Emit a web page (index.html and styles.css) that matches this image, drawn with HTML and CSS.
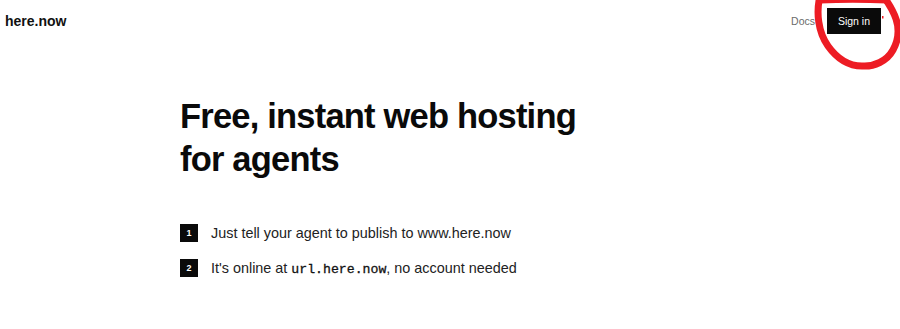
FILE: index.html
```html
<!DOCTYPE html>
<html>
<head>
<meta charset="utf-8">
<link rel="stylesheet" href="styles.css">
</head>
<body>
<header class="topbar">
  <div class="logo">here.now</div>
  <nav class="nav">
    <a class="docs" href="#">Docs</a>
    <a class="signin" href="#">Sign in</a>
  </nav>
</header>
<main class="hero">
  <h1 class="title">Free, instant web hosting<br>for agents</h1>
  <ol class="steps">
    <li class="step"><span class="badge">1</span><span>Just tell your agent to publish to www.here.now</span></li>
    <li class="step"><span class="badge">2</span><span>It's online at <code class="mono">url.here.now</code>, no account needed</span></li>
  </ol>
</main>
<svg class="scribble" width="90" height="75" viewBox="0 0 90 75">
  <path d="M10 -4 C6 12, 8 32, 18 46 C28 60, 40 66, 52 66 C64 67, 77 61, 83 50 C89 39, 89 28, 86 19 C83 10, 79 4, 74 -3" fill="none" stroke="#ed1c24" stroke-width="7" stroke-linecap="round"/>
  <path d="M10 0 C30 -1, 55 -1, 78 0" fill="none" stroke="#ed1c24" stroke-width="7"/>
  <rect x="72" y="16" width="1.5" height="2.5" fill="#ed1c24"/>
</svg>
</body>
</html>
```
FILE: styles.css
```css
html, body {
  margin: 0;
  padding: 0;
  background: #fff;
}
body {
  font-family: "Liberation Sans", Arial, sans-serif;
  color: #111;
  position: relative;
  width: 900px;
  height: 329px;
  overflow: hidden;
}
.topbar {
  display: flex;
  justify-content: space-between;
  align-items: center;
  padding: 8px 19px 0 5px;
  height: 26px;
}
.logo {
  font-weight: 700;
  font-size: 14px;
  color: #111;
}
.nav {
  display: flex;
  align-items: center;
  gap: 12px;
}
.docs {
  font-size: 10.5px;
  color: #6b6b6b;
  text-decoration: none;
}
.signin {
  background: #0a0a0a;
  color: #fff;
  font-size: 10.5px;
  text-decoration: none;
  height: 26px;
  width: 54px;
  display: flex;
  align-items: center;
  justify-content: center;
}
.hero {
  padding: 61px 0 0 180px;
}
.title {
  margin: 0;
  font-size: 34.5px;
  line-height: 43px;
  letter-spacing: -0.8px;
  font-weight: 700;
  color: #0a0a0a;
}
.steps {
  list-style: none;
  margin: 43px 0 0 0;
  padding: 0;
  display: flex;
  flex-direction: column;
  gap: 17px;
}
.step {
  display: flex;
  align-items: center;
  gap: 13px;
  font-size: 14.4px;
  color: #222;
  height: 18px;
}
.badge {
  width: 18px;
  height: 18px;
  background: #0a0a0a;
  color: #fff;
  font-size: 9px;
  font-weight: 700;
  display: flex;
  align-items: center;
  justify-content: center;
}
.mono {
  font-family: "Liberation Mono", "Courier New", monospace;
  font-size: 13.2px;
  color: #111;
  -webkit-text-stroke: 0.3px #111;
}
.scribble {
  position: absolute;
  top: 0;
  left: 810px;
}
```
